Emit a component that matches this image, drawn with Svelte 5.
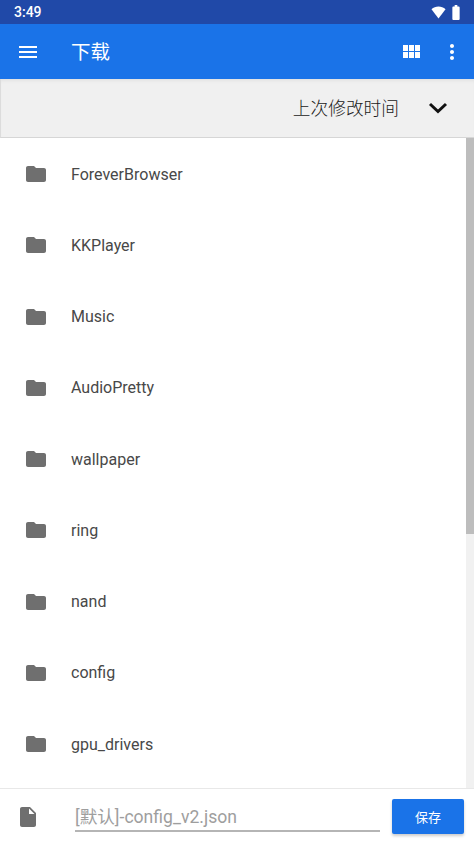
<script>
  const folders = ['ForeverBrowser', 'KKPlayer', 'Music', 'AudioPretty', 'wallpaper', 'ring', 'nand', 'config', 'gpu_drivers'];
  let fileName = $state('');
</script>

<div class="page">
  <div class="status">
    <span class="time">3:49</span>
    <div class="status-icons">
      <svg width="15" height="13" viewBox="0 0 16 13" preserveAspectRatio="none"><path d="M0.5 3.2C2.6 1.4 5.2 0.4 8 0.4s5.4 1 7.5 2.8L8 12.6z" fill="#fff"/></svg>
      <svg width="8" height="15" viewBox="0 0 9 15" preserveAspectRatio="none"><path d="M3 0h3v1.500h1.600c.6 0 1 .4 1 1V14c0 .6-.4 1-1 1H1.400c-.6 0-1-.4-1-1V2.500c0-.6.4-1 1-1H3z" fill="#fff"/></svg>
    </div>
  </div>

  <header class="toolbar">
    <svg class="menu" width="24" height="24" viewBox="0 0 24 24"><path d="M3 18h18v-2H3zm0-5h18v-2H3zm0-7v2h18V6z" fill="#fff"/></svg>
    <span class="title">下载</span>
    <svg class="grid" width="24" height="24" viewBox="0 0 24 24"><path d="M4 11h5V5H4zm0 7h5v-6H4zm6 0h5v-6h-5zm6 0h5v-6h-5zm-6-7h5V5h-5zm6-6v6h5V5z" fill="#fff"/></svg>
    <svg class="more" width="24" height="24" viewBox="0 0 24 24"><path d="M12 8c1.100 0 2-.9 2-2s-.9-2-2-2-2 .9-2 2 .9 2 2 2zm0 2c-1.100 0-2 .9-2 2s.9 2 2 2 2-.9 2-2-.9-2-2-2zm0 6c-1.100 0-2 .9-2 2s.9 2 2 2 2-.9 2-2-.9-2-2-2z" fill="#fff"/></svg>
  </header>

  <div class="sort">
    <span>上次修改时间</span>
    <svg width="20" height="12" viewBox="0 0 20 12"><path d="M2 2l8 7.500L18 2" fill="none" stroke="#111" stroke-width="3"/></svg>
  </div>

  <div class="list-wrap">
    <ul class="list">
      {#each folders as name}
        <li>
          <svg width="24" height="24" viewBox="0 0 24 24"><path d="M10 4H4c-1.100 0-2 .9-2 2v12c0 1.100.9 2 2 2h16c1.100 0 2-.9 2-2V8c0-1.100-.9-2-2-2h-8z" fill="#6f6f6f"/></svg>
          <span>{name}</span>
        </li>
      {/each}
    </ul>
    <div class="scrollbar"><div class="thumb"></div></div>
  </div>

  <footer class="bottom">
    <svg class="file" width="24" height="24" viewBox="0 0 24 24"><path d="M6 2c-1.100 0-2 .9-2 2v16c0 1.100.9 2 2 2h12c1.100 0 2-.9 2-2V8l-6-6zm7 7V3.500L18.500 9z" fill="#6f6f6f"/></svg>
    <input class="name" type="text" placeholder="[默认]-config_v2.json" bind:value={fileName} />
    <button type="button">保存</button>
  </footer>
</div>

<style>
  :global(body) {
    background: #fff;
  }

  .page {
    width: 474px;
    height: 844px;
    display: flex;
    flex-direction: column;
    overflow: hidden;
    font-family: Roboto, "Noto Sans CJK SC", sans-serif;
  }

  .status {
    height: 24px;
    flex: none;
    display: flex;
    align-items: center;
    justify-content: space-between;
    padding: 0 14px;
    background: #2049a8;
    color: #fff;
    font-size: 14px;
    font-weight: 500;
  }

  .status-icons {
    display: flex;
    align-items: center;
    gap: 6px;
  }

  .toolbar {
    height: 55px;
    flex: none;
    display: flex;
    align-items: center;
    padding: 0 10px 0 16px;
    background: #1a73e8;
    color: #fff;
  }

  .title {
    margin: 0 0 3px 31px;
    font-size: 19.500px;
    flex: 1;
  }

  .more {
    margin-left: 17px;
  }

  .sort {
    height: 59px;
    flex: none;
    box-sizing: border-box;
    display: flex;
    align-items: center;
    justify-content: flex-end;
    gap: 29px;
    padding-right: 26px;
    background: #f0f0f0;
    border-left: 1px solid #dcdcdc;
    border-bottom: 1px solid #d6d6d6;
    box-shadow: inset 0 4px 4px -3px #dcdcdc;
    color: #1a1a1a;
    font-size: 17.700px;
    font-weight: 300;
  }

  .sort span {
    margin-bottom: 2px;
  }

  .list-wrap {
    flex: 1;
    display: flex;
    min-height: 0;
  }

  .list {
    flex: 1;
    list-style: none;
    margin: 0;
    padding: 0.500px 0 0;
  }

  li {
    height: 71.250px;
    display: flex;
    align-items: center;
    gap: 23.500px;
    padding-left: 23.500px;
    color: #484848;
    font-size: 16px;
  }

  .scrollbar {
    width: 8px;
    flex: none;
    background: #f1f1f1;
  }

  .thumb {
    height: 396px;
    background: #bdbdbd;
  }

  .bottom {
    height: 56px;
    flex: none;
    box-sizing: border-box;
    display: flex;
    align-items: center;
    padding: 0 10px 0 16px;
    border-top: 1px solid #e8e8e8;
  }

  .name {
    width: 305px;
    height: 30px;
    box-sizing: border-box;
    margin: 0 12px 0 35px;
    padding: 2px 0 0;
    border: none;
    border-bottom: 2px solid #b5b5b5;
    outline: none;
    background: none;
    font: inherit;
    font-size: 17.600px;
  }

  .name::placeholder {
    color: #9e9e9e;
    opacity: 1;
  }

  button {
    width: 72px;
    height: 35px;
    padding: 0;
    border: none;
    border-radius: 2px;
    background: #1a73e8;
    box-shadow: 0 2px 3px rgba(0, 0, 0, 0.2);
    color: #fff;
    font: inherit;
    font-size: 13px;
  }
</style>
